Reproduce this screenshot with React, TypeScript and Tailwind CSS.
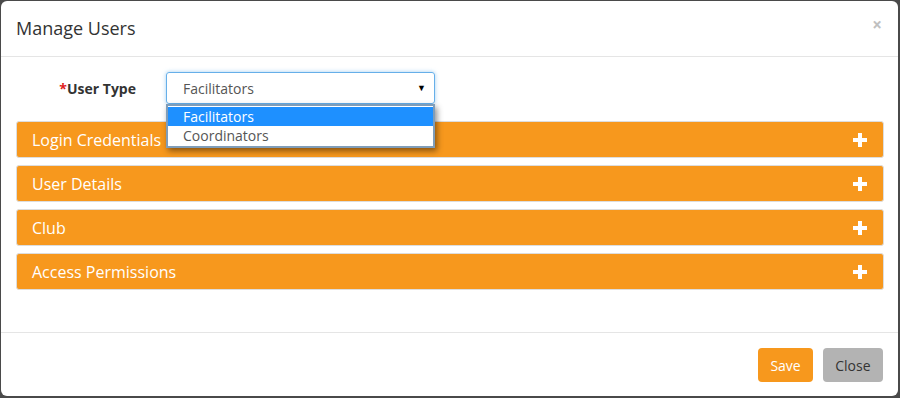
const panels = ["Login Credentials", "User Details", "Club", "Access Permissions"];

const App = () => {
  return (
    <div className="h-[398px] w-[900px] bg-[#4a4a4a] pl-px pt-px pr-[2px] pb-[2px] font-['Open_Sans',sans-serif]">
      <div className="flex h-full w-full flex-col rounded-md bg-white">
        {/* header */}
        <div className="flex h-[56px] items-center justify-between border-b border-[#e5e5e5] px-[15px]">
          <h4 className="text-[18px] text-[#333]">Manage Users</h4>
          <span className="mr-[1px] -mt-[8px] text-[17px] font-bold text-[#c0c0c0]">×</span>
        </div>

        {/* body */}
        <div className="flex-1 px-[15px] pt-[15px]">
          <div className="relative flex items-center">
            <label className="w-[135px] pr-[15px] text-right text-[14px] font-bold text-[#333]">
              <span className="text-[#e02020]">*</span>User Type
            </label>
            <div className="relative ml-[15px] flex h-[32px] w-[269px] items-center justify-between rounded-[3px] border border-[#66afe9] px-[16px] text-[14px] text-[#555] shadow-[0_0_4px_rgba(102,175,233,0.6)]">
              <span>Facilitators</span>
              <span className="-mr-[8px] text-[9px] text-black">▼</span>
              {/* open dropdown */}
              <div className="absolute left-[-1px] top-[31px] z-10 w-[269px] border-2 border-[#7f9db9] bg-white py-px shadow-[2px_3px_6px_rgba(0,0,0,0.45)]">
                <div className="h-[19px] bg-[#1e90ff] pl-[15px] text-[14px] leading-[19px] text-white">Facilitators</div>
                <div className="h-[19px] pl-[15px] text-[14px] leading-[19px] text-[#555]">Coordinators</div>
              </div>
            </div>
          </div>

          <div className="mt-[17px] -mr-px flex flex-col gap-[7px]">
            {panels.map((p) => (
              <div
                key={p}
                className="flex h-[37px] items-center justify-between rounded-[3px] border border-[#dddddd] bg-[#f7981d] pl-[15px] pr-[16px] text-[16px] text-white"
              >
                <span>{p}</span>
                <svg width="14" height="14" viewBox="0 0 14 14">
                  <rect x="5" y="0" width="4" height="14" fill="white" />
                  <rect x="0" y="5" width="14" height="4" fill="white" />
                </svg>
              </div>
            ))}
          </div>
        </div>

        {/* footer */}
        <div className="flex h-[64px] items-center justify-end gap-[10px] border-t border-[#e5e5e5] px-[15px] pt-[1px]">
          <button className="h-[34px] rounded-[4px] bg-[#f7981d] px-[12px] text-[14px] text-white">Save</button>
          <button className="h-[34px] rounded-[4px] bg-[#b3b3b3] px-[12.5px] text-[14px] text-[#333]">Close</button>
        </div>
      </div>
    </div>
  );
};

export default App;
